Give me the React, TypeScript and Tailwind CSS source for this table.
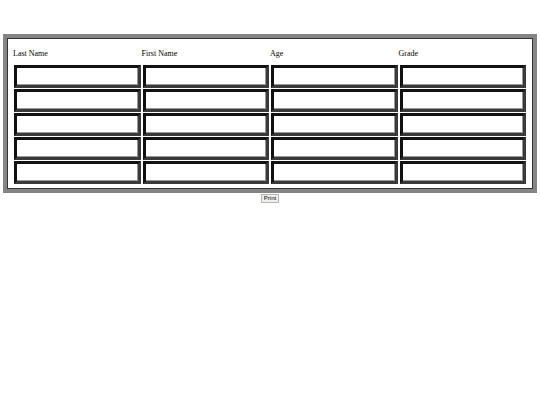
const headers = ["Last Name", "First Name", "Age", "Grade"];
const rows = [0, 1, 2, 3, 4];

export default function App() {
  return (
    <div className="w-[540px] h-[405px] bg-white pt-[34px]" style={{ fontFamily: "'Liberation Serif', serif" }}>
      <div className="mx-[3px] w-[534px] border-[4px] border-[#858585] shadow-[inset_0_0_0_1px_#333] px-[7px] pt-[11px] pb-[5px]">
        <div className="grid grid-cols-4 gap-x-[2px] text-[8px] leading-[10px] text-black h-[16px]">
          {headers.map((h) => (
            <div key={h} className="-ml-[1px]">{h}</div>
          ))}
        </div>
        <div className="flex flex-col gap-[1px]">
          {rows.map((r) => (
            <div key={r} className="grid grid-cols-4 gap-x-[2px]">
              {headers.map((h) => (
                <div
                  key={h}
                  className="h-[23px] border-[3px] border-t-[#111] border-l-[#111] border-b-[#3a3a3a] border-r-[#3a3a3a] shadow-[inset_-1px_-1px_0_#999] bg-white"
                />
              ))}
            </div>
          ))}
        </div>
      </div>
      <div className="flex justify-center mt-[1px]">
        <button
          className="h-[9px] px-[2px] text-[6px] leading-[7px] bg-[#efefef] border border-[#b5b5b5] text-black"
          style={{ fontFamily: "'Liberation Sans', sans-serif" }}
        >
          Print
        </button>
      </div>
    </div>
  );
}
